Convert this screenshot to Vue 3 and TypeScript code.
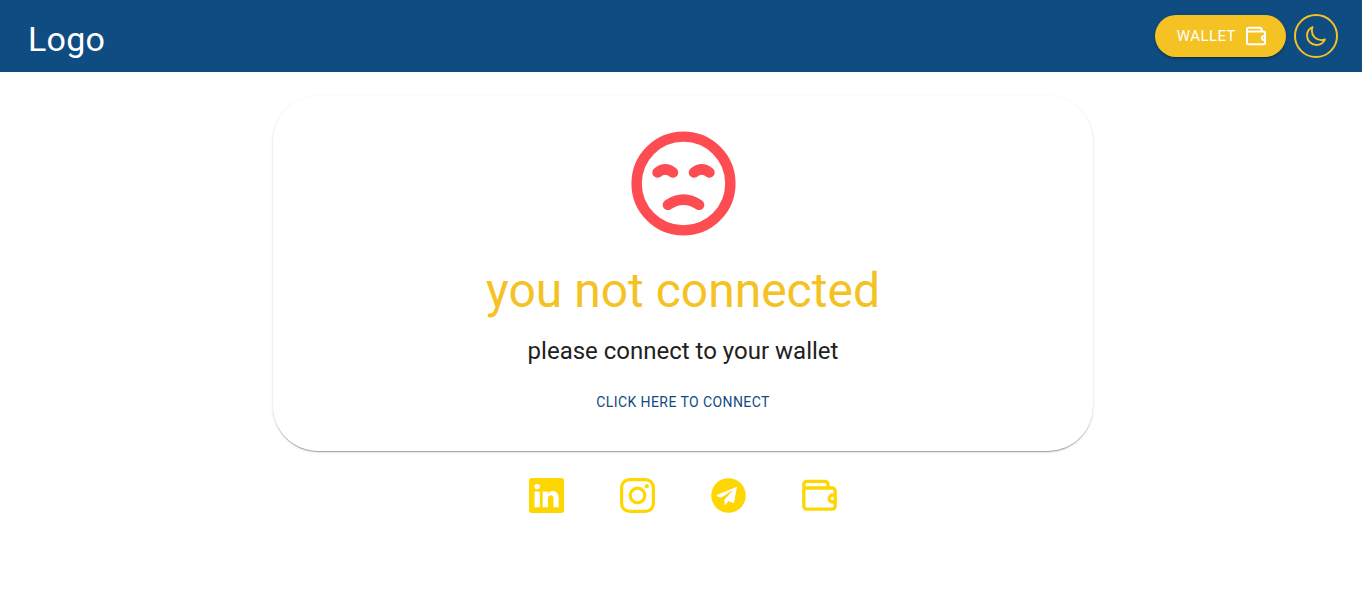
<script setup lang="ts">
import { ref } from 'vue'

const dark = ref<boolean>(false)
</script>

<template>
  <div class="page">
    <header class="bar">
      <div class="logo">Logo</div>
      <div class="actions">
        <button class="wallet" type="button">
          <span>WALLET</span>
          <svg width="24" height="24" viewBox="0 0 24 24" fill="none" stroke="currentColor" stroke-width="2" stroke-linejoin="round" aria-hidden="true">
            <path d="M3 7V5.300a1.500 1.500 0 0 1 1.500-1.500H16a1.500 1.500 0 0 1 1.500 1.500V7.500M3 7.500h16.500A1.500 1.500 0 0 1 21 9v9.700a1.500 1.500 0 0 1-1.500 1.500h-15A1.500 1.500 0 0 1 3 18.700z" />
            <path d="M21 12h-1a2 2 0 0 0 0 4h1" />
          </svg>
        </button>
        <button class="mode" type="button" aria-label="Toggle theme" :aria-pressed="dark" @click="dark = !dark">
          <svg width="22" height="22" viewBox="0 0 512 512" fill="none" stroke="currentColor" stroke-width="44" stroke-linejoin="round" aria-hidden="true">
            <path d="M160 136c0-30.620 4.510-61.610 16-88C99.570 81.270 48 159.320 48 248c0 119.290 96.710 216 216 216 88.680 0 166.730-51.570 200-128-26.390 11.490-57.380 16-88 16-119.290 0-216-96.710-216-216z" />
          </svg>
        </button>
      </div>
    </header>

    <main class="content">
      <section class="card">
        <svg class="face" width="125" height="125" viewBox="0 0 24 24" fill="none" stroke="currentColor" stroke-width="2" stroke-linecap="round" aria-hidden="true">
          <circle cx="12" cy="12" r="9" />
          <path d="M7 9.900q1.500-1.200 3 0M14 9.900q1.500-1.200 3 0M9 16.100q3-2 6 0" />
        </svg>
        <h1>you not connected</h1>
        <p>please connect to your wallet</p>
        <button class="connect" type="button">CLICK HERE TO CONNECT</button>
      </section>

      <nav class="social" aria-label="Social links">
        <a href="#linkedin" aria-label="LinkedIn">
          <svg width="35" height="35" viewBox="0 0 16 16" fill="currentColor" aria-hidden="true">
            <path d="M0 1.146C0 .513.526 0 1.175 0h13.650C15.474 0 16 .513 16 1.146v13.708c0 .633-.526 1.146-1.175 1.146H1.175C.526 16 0 15.487 0 14.854V1.146zm4.943 12.248V6.169H2.542v7.225h2.401zm-1.200-8.212c.837 0 1.358-.554 1.358-1.248-.015-.709-.520-1.248-1.342-1.248-.822 0-1.359.540-1.359 1.248 0 .694.521 1.248 1.327 1.248h.016zm4.908 8.212V9.359c0-.216.016-.432.080-.586.173-.431.568-.878 1.232-.878.869 0 1.216.662 1.216 1.634v3.865h2.401V9.250c0-2.220-1.184-3.252-2.764-3.252-1.274 0-1.845.700-2.165 1.193V6.169h-2.400c.030.678 0 7.225 0 7.225h2.400z" />
          </svg>
        </a>
        <a href="#instagram" aria-label="Instagram">
          <svg width="35" height="35" viewBox="0 0 35 35" fill="none" stroke="currentColor" stroke-width="3.200" aria-hidden="true">
            <rect x="1.600" y="1.600" width="31.800" height="31.800" rx="8" />
            <circle cx="17.500" cy="17.500" r="7.300" />
            <circle cx="26.800" cy="8.200" r="2.100" fill="currentColor" stroke="none" />
          </svg>
        </a>
        <a href="#telegram" aria-label="Telegram">
          <svg width="35" height="35" viewBox="0 0 35 35" aria-hidden="true">
            <circle cx="17.500" cy="17.500" r="17.300" fill="currentColor" />
            <path d="M26 8.800 6.200 16.700c-.9.400-.9 1.200 0 1.500l3.800 1.500L22.500 11.800l-9.200 9.900.4 4.700c.1.600.5.700.9.300l2.900-3.700 4.500 1.900c.6.200 1 0 1.100-.6z" fill="#fff" />
          </svg>
        </a>
        <a href="#wallet" aria-label="Wallet">
          <svg width="35" height="35" viewBox="0 0 35 35" fill="none" stroke="currentColor" stroke-width="3.300" stroke-linejoin="round" aria-hidden="true">
            <path d="M1.800 9V6.300a3 3 0 0 1 3-3H23a3 3 0 0 1 3 3V10M1.800 10h28.400a3 3 0 0 1 3 3v15.200a3 3 0 0 1-3 3H4.800a3 3 0 0 1-3-3z" />
            <path d="M33 17.200h-2.500a3.400 3.400 0 0 0 0 6.800H33" />
          </svg>
        </a>
      </nav>
    </main>
  </div>
</template>

<style scoped>
.page {
  font-family: Roboto, Arial, sans-serif;
  color: #212121;
}
.bar {
  display: flex;
  align-items: center;
  justify-content: space-between;
  height: 72px;
  box-sizing: border-box;
  padding: 0 24px 0 28px;
  background: #0f4c81;
}
.logo {
  padding-top: 6px;
  font-size: 34px;
  line-height: 42px;
  letter-spacing: 0.007em;
  color: #fff;
}
.actions {
  display: flex;
  align-items: center;
  gap: 8px;
}
button {
  font-family: inherit;
  cursor: pointer;
  border: 0;
}
.wallet {
  display: flex;
  align-items: center;
  gap: 8px;
  padding: 8px 18px 8px 22px;
  border-radius: 24px;
  background: #f5c224;
  color: #fff;
  font-size: 15px;
  line-height: 26px;
  letter-spacing: 0.03em;
  box-shadow: 0 3px 1px -2px rgba(0, 0, 0, 0.2), 0 2px 2px 0 rgba(0, 0, 0, 0.14), 0 1px 5px 0 rgba(0, 0, 0, 0.12);
}
.mode {
  display: flex;
  align-items: center;
  justify-content: center;
  width: 44px;
  height: 44px;
  padding: 0;
  border: 2px solid #f5c224;
  border-radius: 50%;
  background: transparent;
  color: #f5c224;
}
.content {
  display: flex;
  flex-direction: column;
  align-items: center;
  gap: 27px;
  padding: 24px 0 24px 4px;
}
.card {
  display: flex;
  flex-direction: column;
  align-items: center;
  width: 100%;
  max-width: 820px;
  box-sizing: border-box;
  padding: 25px 24px 33px;
  border-radius: 45px;
  background: #fff;
  box-shadow: 0 2px 1px -1px rgba(0, 0, 0, 0.2), 0 1px 1px 0 rgba(0, 0, 0, 0.14), 0 1px 3px 0 rgba(0, 0, 0, 0.12);
}
.face {
  color: #fd4d52;
}
h1 {
  margin: 17px 0 0;
  font-size: 48px;
  font-weight: 400;
  line-height: 56px;
  color: #f5c224;
}
p {
  margin: 16px 0 0;
  font-size: 24px;
  line-height: 32px;
}
.connect {
  margin-top: 19px;
  padding: 4px 5px;
  border-radius: 4px;
  background: transparent;
  color: #0f4c81;
  font-size: 14px;
  line-height: 24px;
  letter-spacing: 0.03em;
}
.social {
  display: flex;
  gap: 56px;
}
.social a {
  display: flex;
  color: #ffd700;
}
</style>

<style>
body {
  margin: 0;
  background: #fff;
}
</style>
